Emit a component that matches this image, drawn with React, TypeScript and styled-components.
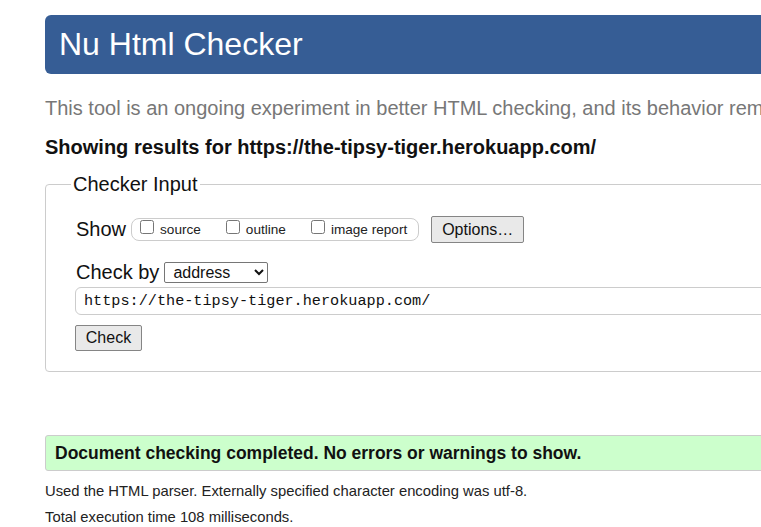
import styled, { createGlobalStyle } from 'styled-components';

const GlobalStyle = createGlobalStyle`
   html, body {
      margin: 0;
      overflow: hidden;
      background: #fff;
   }
   body {
      font-family: 'Liberation Sans', Arial, sans-serif;
      color: #111;
   }
`;

const Page = styled.div`
   width: 1000px;
   padding: 15px 0 0 45px;
`;

const Header = styled.h1`
   margin: 0;
   height: 59px;
   padding-left: 14px;
   border-radius: 6px;
   background: #365d95;
   color: #fff;
   font-size: 32px;
   font-weight: 400;
   line-height: 59px;
`;

const Intro = styled.p`
   margin: 22px 0 0;
   font-size: 20px;
   line-height: 24px;
   color: #777;
   white-space: nowrap;
`;

const Results = styled.p`
   margin: 15px 0 0;
   font-size: 20px;
   font-weight: 700;
   line-height: 24px;
`;

const Fieldset = styled.fieldset`
   margin: 13px 0 0;
   padding: 0 0 20px 30px;
   border: 1px solid #ccc;
   border-radius: 4px;
`;

const Legend = styled.legend`
   margin-left: -5px;
   padding: 0 2px;
   font-size: 20px;
   line-height: 24px;
`;

const Row = styled.div<{ top: number; height: number }>`
   display: flex;
   align-items: center;
   margin-top: ${p => p.top}px;
   height: ${p => p.height}px;
`;

const Label = styled.span`
   font-size: 20px;
   margin-right: 5px;
`;

const Pill = styled.div`
   display: flex;
   align-items: center;
   height: 21px;
   padding: 0 11px 0 8px;
   border: 1px solid #ccc;
   border-radius: 8px;
   gap: 25px;
`;

const Option = styled.label`
   display: flex;
   align-items: center;
   gap: 6px;
   font-size: 13.6px;
   color: #222;
`;

const Box = styled.input`
   margin: 0 0 6px;
   width: 14px;
   height: 14px;
`;

const Button = styled.button<{ width: number; height: number }>`
   width: ${p => p.width}px;
   height: ${p => p.height}px;
   padding: 0;
   border: 1px solid #858585;
   border-radius: 2px;
   background: #e9e9e9;
   font-family: 'Liberation Sans', Arial, sans-serif;
   font-size: 16px;
   color: #111;
`;

const OptionsButton = styled(Button)`
   margin-left: 12px;
`;

const Select = styled.select`
   width: 104px;
   height: 21px;
   padding: 0 0 0 4px;
   border: 1px solid #767676;
   border-radius: 2px;
   background: #fff;
   font-family: 'Liberation Sans', Arial, sans-serif;
   font-size: 16px;
   color: #111;
`;

const UrlInput = styled.input`
   display: block;
   box-sizing: border-box;
   width: 940px;
   height: 28px;
   margin: 4px 0 0 -1px;
   padding: 0 8px;
   border: 1px solid #ccc;
   border-radius: 6px;
   font-family: 'Liberation Mono', Consolas, monospace;
   font-size: 15.2px;
   color: #111;
`;

const CheckRow = styled.div`
   margin: 10px 0 0 -1px;
   height: 26px;
`;

const Success = styled.div`
   margin-top: 63px;
   height: 34px;
   padding-left: 9px;
   border: 1px solid #ccc;
   border-radius: 3px;
   background: #ccffcc;
   font-size: 17.5px;
   font-weight: 700;
   line-height: 34px;
`;

const Note = styled.p<{ top: number }>`
   margin: ${p => p.top}px 0 0;
   font-size: 14.8px;
   line-height: 18px;
   color: #222;
`;

export default function App() {
   return (
      <Page>
         <GlobalStyle />
         <Header>Nu Html Checker</Header>
         <Intro>
            This tool is an ongoing experiment in better HTML checking, and its behavior remains subject to change
         </Intro>
         <Results>Showing results for https://the-tipsy-tiger.herokuapp.com/</Results>
         <Fieldset>
            <Legend>Checker Input</Legend>
            <Row top={20} height={27}>
               <Label>Show</Label>
               <Pill>
                  <Option>
                     <Box type="checkbox" />
                     source
                  </Option>
                  <Option>
                     <Box type="checkbox" />
                     outline
                  </Option>
                  <Option>
                     <Box type="checkbox" />
                     image report
                  </Option>
               </Pill>
               <OptionsButton width={93} height={27}>
                  Options…
               </OptionsButton>
            </Row>
            <Row top={19} height={21}>
               <Label>Check by</Label>
               <Select defaultValue="address">
                  <option value="address">address</option>
                  <option value="file">file upload</option>
                  <option value="text">text input</option>
               </Select>
            </Row>
            <UrlInput type="url" defaultValue="https://the-tipsy-tiger.herokuapp.com/" />
            <CheckRow>
               <Button width={67} height={26}>
                  Check
               </Button>
            </CheckRow>
         </Fieldset>
         <Success>Document checking completed. No errors or warnings to show.</Success>
         <Note top={11}>Used the HTML parser. Externally specified character encoding was utf-8.</Note>
         <Note top={8}>Total execution time 108 milliseconds.</Note>
      </Page>
   );
}
